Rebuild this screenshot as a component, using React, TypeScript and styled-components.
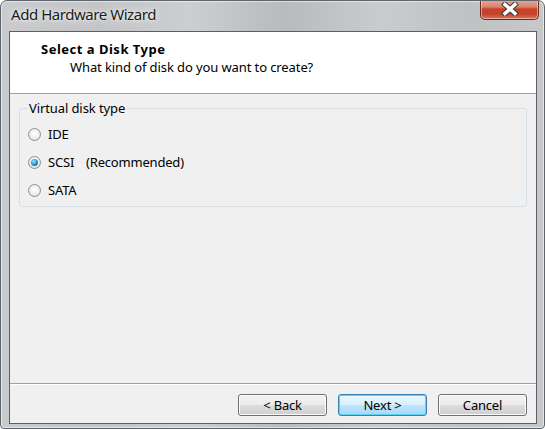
import React from "react";
import styled, { createGlobalStyle } from "styled-components";

const Global = createGlobalStyle`
  html, body { margin: 0; padding: 0; background: #ffffff; }
  body { font-family: "Noto Sans", "Open Sans", sans-serif; font-size: 13px; color: #000; }
  * { box-sizing: border-box; }
`;

const Window = styled.div`
  width: 545px;
  height: 429px;
  display: flex;
  flex-direction: column;
  border: 1px solid #5d646c;
  border-radius: 7px 7px 4px 4px;
  background: linear-gradient(90deg, #c9cbcd 0%, #c2c4c6 18%, #cdcecf 35%, #b8babc 52%, #c9cbcc 70%, #bfc1c3 86%, #c6c8ca 100%);
  box-shadow: inset 0 0 0 1px rgba(255,255,255,0.55);
  padding: 0 7px 4px 8px;
  overflow: hidden;
`;

const TitleBar = styled.div`
  height: 30px;
  display: flex;
  align-items: flex-start;
  justify-content: space-between;
`;

const TitleText = styled.div`
  font-family: "Noto Sans", sans-serif;
  font-size: 15px;
  color: #1b1b1b;
  padding: 3px 0 0 2px;
  letter-spacing: -0.45px;
  text-shadow: 0 0 8px rgba(255,255,255,0.9), 0 0 3px rgba(255,255,255,0.9);
`;

const CloseButton = styled.div`
  width: 59px;
  height: 21px;
  margin-top: -2px;
  margin-right: -2px;
  border: 1px solid #6b2a1f;
  border-top: none;
  border-radius: 0 0 5px 5px;
  background: linear-gradient(180deg, #e8b0a2 0%, #d9826b 40%, #c8412a 50%, #c4432c 75%, #d8745a 100%);
  box-shadow: inset 0 0 0 1px rgba(255,255,255,0.45);
  display: flex;
  align-items: center;
  justify-content: center;
`;

const Client = styled.div`
  flex: 1;
  display: flex;
  flex-direction: column;
  border: 1px solid #5a5f66;
  background: #f0f0f0;
`;

const Header = styled.div`
  height: 62px;
  background: #ffffff;
  border-bottom: 1px solid #a0a0a0;
  padding: 9px 0 0 31px;
  display: flex;
  flex-direction: column;
  gap: 2px;
`;

const HeaderTitle = styled.div`
  font-weight: bold;
  font-size: 13px;
  line-height: 16px;
  letter-spacing: 0.5px;
`;

const HeaderSub = styled.div`
  font-size: 13px;
  line-height: 16px;
  padding-left: 29px;
  letter-spacing: -0.1px;
`;

const Body = styled.div`
  flex: 1;
  padding: 6px 9px 0 9px;
  border-bottom: 1px solid #a0a0a0;
`;

const GroupBox = styled.fieldset`
  margin: 0;
  padding: 8px 7px 6px 8px;
  border: 1px solid #d5dfe5;
  border-radius: 3px;
  display: flex;
  flex-direction: column;
  gap: 8px;
`;

const Legend = styled.legend`
  padding: 0 1px;
  margin-left: 0;
  font-size: 13px;
  line-height: 16px;
  color: #000;
  letter-spacing: -0.1px;
`;

const RadioRow = styled.label`
  display: flex;
  align-items: center;
  height: 20px;
  font-size: 13px;
  letter-spacing: -0.2px;
`;

const RadioCircle = styled.span<{ $checked?: boolean }>`
  width: 13px;
  height: 13px;
  border-radius: 50%;
  border: 1px solid #8e8f8f;
  background: radial-gradient(circle at 50% 40%, #ffffff 0%, #f3f3f3 40%, #d7d7d7 100%);
  margin-right: 7px;
  display: flex;
  align-items: center;
  justify-content: center;
  flex-shrink: 0;
  &::after {
    content: "";
    display: ${(p) => (p.$checked ? "block" : "none")};
    width: 7px;
    height: 7px;
    border-radius: 50%;
    background: radial-gradient(circle at 40% 35%, #a8e3fb 0%, #2f9ad6 45%, #0d4b84 100%);
  }
`;

const Note = styled.span`
  margin-left: 12px;
`;

const Footer = styled.div`
  height: 39px;
  display: flex;
  justify-content: flex-end;
  align-items: flex-start;
  gap: 11px;
  padding: 9px 9px 0 0;
  border-top: 1px solid #ffffff;
`;

const Button = styled.button<{ $default?: boolean }>`
  width: 89px;
  height: 22px;
  font-family: "Noto Sans", sans-serif;
  font-size: 13px;
  color: #000;
  border-radius: 3px;
  border: 1px solid ${(p) => (p.$default ? "#3c7fb1" : "#707070")};
  background: ${(p) =>
    p.$default
      ? "linear-gradient(180deg, #eaf6fd 0%, #d9f0fc 50%, #bee6fd 51%, #a7d9f5 100%)"
      : "linear-gradient(180deg, #f2f2f2 0%, #ebebeb 50%, #dddddd 51%, #cfcfcf 100%)"};
  box-shadow: inset 0 0 0 1px ${(p) => (p.$default ? "#5fd0f5" : "#fcfcfc")};
  padding: 0;
  letter-spacing: -0.2px;
`;

export default function App() {
  return (
    <>
      <Global />
      <Window>
        <TitleBar>
          <TitleText>Add Hardware Wizard</TitleText>
          <CloseButton>
            <svg width="18" height="14" viewBox="0 0 18 14">
              <path
                d="M4 2.5 L14 11.5 M14 2.5 L4 11.5"
                stroke="#3b3b3b"
                strokeWidth="5.5"
                strokeLinecap="square"
              />
              <path
                d="M4 2.5 L14 11.5 M14 2.5 L4 11.5"
                stroke="#ffffff"
                strokeWidth="3.5"
                strokeLinecap="square"
              />
            </svg>
          </CloseButton>
        </TitleBar>
        <Client>
          <Header>
            <HeaderTitle>Select a Disk Type</HeaderTitle>
            <HeaderSub>What kind of disk do you want to create?</HeaderSub>
          </Header>
          <Body>
            <GroupBox>
              <Legend>Virtual disk type</Legend>
              <RadioRow>
                <RadioCircle />
                IDE
              </RadioRow>
              <RadioRow>
                <RadioCircle $checked />
                SCSI<Note>(Recommended)</Note>
              </RadioRow>
              <RadioRow>
                <RadioCircle />
                SATA
              </RadioRow>
            </GroupBox>
          </Body>
          <Footer>
            <Button>&lt; Back</Button>
            <Button $default>Next &gt;</Button>
            <Button>Cancel</Button>
          </Footer>
        </Client>
      </Window>
    </>
  );
}
